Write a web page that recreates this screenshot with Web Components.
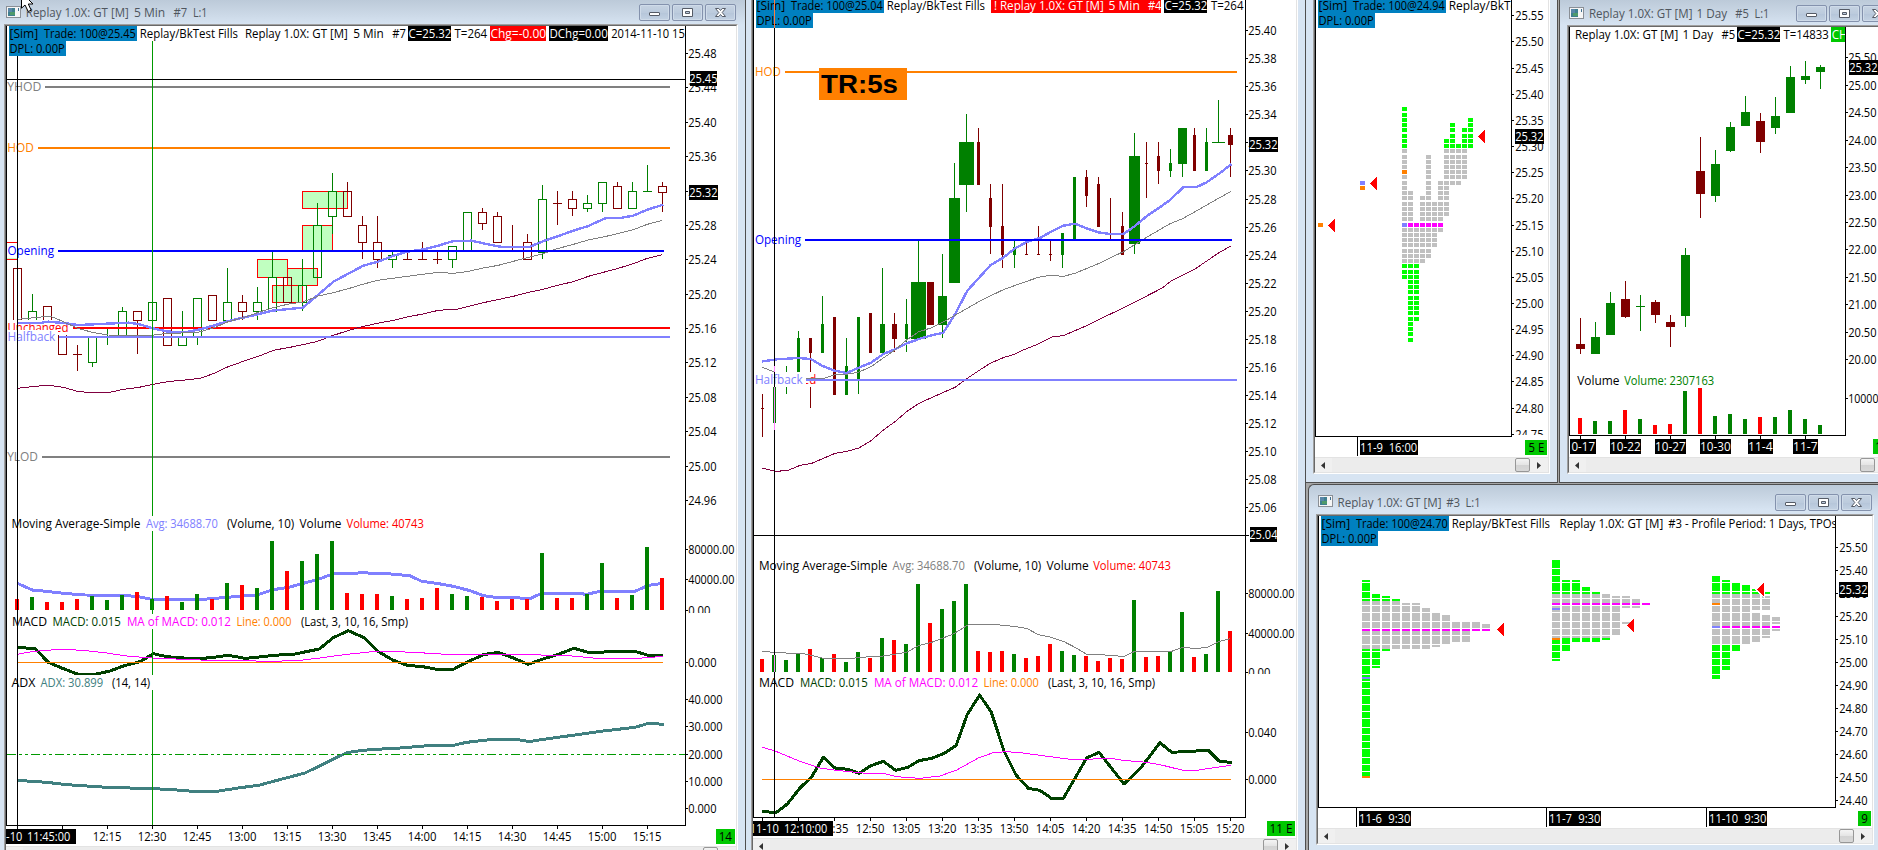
<!DOCTYPE html>
<html lang="en">
<head>
<meta charset="utf-8">
<title>Replay charts</title>
<style>
html,body{margin:0;padding:0;width:1878px;height:850px;overflow:hidden;background:#a6a6a6}
</style>
</head>
<body>
<trading-desk></trading-desk>
<script>
const GREEN='#008000',DARK='#800000',RED='#ff0000',BLUE='#8080ff',ORANGE='#ff8000',LIME='#00ff00',GRAY='#c0c0c0',PINK='#ff00ff',MACD='#004000',BADGE='#00c800',SIM='#0080c0';
const FONT="font-family:'Open Sans','Noto Sans',sans-serif;font-size:12px";

/* ---------- drawing helpers ---------- */
const esc=s=>s.replace(/&/g,'&amp;').replace(/</g,'&lt;');
// The run starts a little early so that the glyphs' side bearings fall outside x1..x2.
const T=(x1,x2,y,s,c='#000')=>`<text x="${(x1-.8).toFixed(1)}" y="${y}" textLength="${(x2-x1+1.3).toFixed(1)}" lengthAdjust="spacingAndGlyphs" fill="${c}">${esc(s)}</text>`;
const R=(x1,y1,x2,y2,c)=>`<rect x="${x1}" y="${y1}" width="${x2-x1}" height="${y2-y1}" fill="${c}"/>`;
const H=(x1,x2,y,c)=>R(x1,y,x2,y+2,c);
// A curve is a list of segments; each holds an origin and points in thirds of a pixel.
const line=(segs,c,w)=>{
  const pts=segs.map(([ox,oy,p])=>p.split(' ').map(q=>{const [a,b]=q.split(',');return (ox+a/3).toFixed(2)+','+(oy+b/3).toFixed(2)}).join(' ')).join(' ');
  return `<polyline points="${pts}" fill="none" stroke="${c}" stroke-width="${w}" stroke-linejoin="round"/>`;
};
const rows=s=>s.split(';').map(r=>r.trim().split(' '));
// Candle row: colour, high, body top, body bottom, low, optional width. "-" marks a bar with no body.
const hollow=(x0,step,data)=>rows(data).map(([k,h,t,b,l],i)=>{
  const c=k==='G'?GREEN:DARK,x=x0+step*i;
  if(t==='-') return R(x,+h,x+1,+l+1,c)+(b==='-'?'':R(x-4,+b,x+5,+b+1,c));
  return (h<t?R(x,+h,x+1,+t,c):'')+(+l>+b?R(x,+b,x+1,+l+1,c):'')+
    `<rect x="${x-3.5}" y="${+t+.5}" width="8" height="${b-t}" fill="none" stroke="${c}"/>`;
}).join('');
const solid=(x0,step,data,dw)=>rows(data).map(([k,h,t,b,l,w=dw],i)=>{
  const c=k==='G'?GREEN:DARK,x=x0+step*i,hw=(w-1)/2;
  return R(x,+h,x+1,+l,c)+(t==='-'?(b==='-'?'':R(x-hw,+b,x+hw+1,+b+1,c)):R(x-hw,+t,x+hw+1,+b,c));
}).join('');
const bars=(x0,step,oy,base,data)=>data.split(' ').map((v,i)=>{
  const x=x0+step*i-2;return R(x,oy+parseInt(v)/3,x+4,base,v.endsWith('R')?RED:GREEN);
}).join('');
const tri=(x,y)=>`<polygon points="${x},${y} ${x+7},${y-6.5} ${x+7},${y+6.5}" fill="${RED}"/>`;
const frame=(x,top,axis,bottom)=>R(x,top,x+1,bottom+1,'#000')+R(x,bottom,axis+1,bottom+1,'#000')+R(axis,top,axis+1,bottom+1,'#000');
const sim=(x,y,price,fills=97)=>R(x,y<0?0:y,x+128,y+15,SIM)+R(x,y+15,x+57,y+30,SIM)+
  T(x+1.3,x+28.7,y+12,'[Sim]')+T(x+35.7,x+126.3,y+12,'Trade: 100@'+price)+T(x+1.3,x+55.3,y+27,'DPL: 0.00P')+
  T(x+131.5,x+131.5+fills,y+12,'Replay/BkTest Fills');
const label=(x,w,bw,y,s,c,up=12)=>R(x-1,y-up,x+bw,y+3,'#fff')+T(x,x+w,y,s,c);
const ticks=(axis,len,list)=>list.map(([y,s,w=27])=>R(axis+1,y,axis+1+len,y+1,'#000')+T(axis+len+2,axis+len+2+w,y+5,s)).join('');
const now=(x,y,s,pad=1)=>R(x,y,x+27+2*pad,y+15,'#000')+T(x+pad,x+pad+27,y+12,s,'#fff');
const times=(y,list)=>list.map(([x,s])=>R(x,y,x+1,y+3,'#000')+(s?T(x-13.5,x+14,y+15,s):'')).join('');

/* ---------- chart 7: five minutes, hollow candles ---------- */
const c7plot=()=>{
 const X=370;
 return [[302,191,347,208],[302,225,332,250],[257,259,287,277],[287,268,317,285],[272,285,302,302]].map(([a,b,c,d])=>`<rect x="${a+.5}" y="${b+.5}" width="${c-a}" height="${d-b}" fill="#c0ffc0" stroke="${RED}"/>`).join('')+
 R(7,242,17,243,RED)+R(7,258,17,259,'#c0ffc0')+R(7,259,17,260,RED)+
 hollow(17,15,`R 268 268 325 325;G 294 311 325 325;R 306 306 325 325;R 332 332 354 354;R 345 - 354 370;G 337 337 362 366;G 328 - - 344;G 307 311 336 336;R 311 311 320 353;G 302 302 320 320;R 298 298 345 345;G 311 337 345 345;G 298 298 337 344;R 295 295 320 320;G 268 302 320 320;R 295 302 311 319;G 287 302 311 319;G 252 277 311 311;R 277 277 302 302;G 259 285 302 310;G 203 225 277 277;G 173 191 216 233;R 182 191 216 216;R 216 225 242 258;R 216 242 259 267;G 252 255 259 267;R 251 - 259 259;R 242 - 259 259;R 252 - 259 263;G 246 246 259 267;G 212 212 250 250;R 208 212 223 229;R 212 216 242 242;R 225 - - 250;R 234 242 259 259;G 185 199 252 258;R 191 - 203 224;R 191 199 208 215;G 195 203 208 211;G 182 182 203 211;R 182 186 208 208;G 182 191 208 208;G 165 - 191 191;R 182 186 192 211`)+
 label(8.3,59.7,62,332,'Unchanged',RED)+
 H(45,670,86,'#808080')+H(38,670,147,ORANGE)+H(73,670,327,RED)+H(42,670,456,'#808080')+
 line([[0,0,'52,969 120,969 145,965 190,969 235,975 282,973 320,971 385,968 415,972 455,984 500,994 530,997 560,996 600,988 640,977 685,963 770,944 817,932 908,923 950,888 1000,845 1088,798'],[X,0,'0,791 22,786 68,768 112,755 160,748 205,737 250,723 305,722 345,731 390,740 430,741 478,741 518,724 560,710 610,692 655,678 705,655 750,654 790,647 832,629 880,614']],BLUE,2.4)+
 line([[0,0,'52,958 105,953 150,948 190,965 235,986 282,998 325,1005 370,1007 455,1006 500,1000 590,998 640,984 685,965 730,953 775,937 820,923 862,913 908,906 955,888 1000,878 1045,866 1088,853'],[X,0,'0,847 22,841 68,835 112,829 158,823 205,817 250,820 290,815 340,804 385,796 430,784 475,772 520,761 562,746 610,733 655,720 700,711 750,699 790,689 832,673 877,661']],'#808080',1)+
 line([[0,0,'52,1165 95,1160 130,1157 155,1157 190,1162 232,1174 262,1177 330,1177 370,1168 412,1163 455,1154 502,1145 565,1139 600,1135 640,1121 680,1102 727,1085 775,1069 820,1051 880,1040 950,1025 1000,1006 1050,990 1090,979'],[X,0,'0,975 22,970 70,961 112,951 158,942 205,931 265,927 305,917 340,908 430,889 475,877 520,868 562,856 610,845 655,829 700,817 745,805 790,791 832,775 877,764']],'#800040',1)+
 H(58,664,250,'#0000ff')+H(59,670,336,BLUE)+
 label(8,33,33,91,'YHOD','#808080')+label(8,25.3,26,152,'HOD',ORANGE)+label(8.3,45.2,47,255,'Opening','#0000ff')+
 label(8.3,46.5,50,341,'Halfback',BLUE,11)+label(8,29.5,31,461,'YLOD','#808080')+
 line([[0,420,'52,490 97,510 140,514 190,520 255,525 375,526 420,531 455,538 610,538 680,532 770,525 820,509 870,501 910,490 955,478 1000,461 1060,461 1090,457'],[X,420,'0,460 40,460 120,467 155,484 200,490 250,499 300,512 340,527 375,532 430,532 478,537 515,520 620,520 650,523 690,514 795,514 835,496 880,490']],BLUE,3)+
 bars(17,15,420,610,'537R 531G 546R 546R 537R 528G 540G 525G 516R 537G 528R 546G 522G 537R 489G 495R 504G 363G 453R 423G 402G 363G 519R 522R 522R 528G 537R 534R 504R 522G 528G 531R 543R 537R 537R 399G 534R 534R 522G 429G 534R 525G 381G 474R')+
 line([[0,420,'52,682 105,686 145,727 185,744 232,762 290,762 330,753 370,738 420,725 460,701 500,710 590,717 640,712 685,706 735,715 770,712 820,706 885,702 958,687 1000,653 1045,632 1092,653'],[X,420,'22,693 68,720 112,736 158,740 200,748 250,748 290,727 340,704 385,697 430,714 475,733 515,718 565,703 612,685 655,697 795,694 835,706 880,706']],MACD,3)+
 line([[0,420,'52,703 100,694 180,688 250,691 320,699 380,708 455,714 600,720 820,724 900,721 960,714 1040,703 1138,693'],[X,420,'130,697 230,703 440,704 585,706 680,715 805,715 880,709']],PINK,1)+
 R(17,662,663,663,ORANGE)+
 line([[0,420,'52,1081 140,1087 200,1094 320,1102 460,1106 520,1109 580,1114 650,1114 715,1104 780,1095 820,1084 915,1059 960,1037 1040,998 1075,993 1110,989'],[X,420,'90,984 185,976 250,976 290,967 370,958 440,958 478,965 520,958 600,947 700,933 795,922 835,910 883,913']],'#408080',3)+
 `<path d="M7 754.5H685" stroke="#009900" stroke-dasharray="9 3 3 3 3 3"/>`+
 R(152,41,153,825,'#009900')+
 R(11,516,425,531,'#fff')+R(11,614,410,629,'#fff')+R(11,675,155,690,'#fff')+
 T(12.3,140,528,'Moving Average-Simple')+T(146.7,217.3,528,'Avg: 34688.70',BLUE)+T(227.7,293.7,528,'(Volume, 10)')+T(300.3,341,528,'Volume')+T(347.3,423.3,528,'Volume: 40743',RED)+
 T(12.7,46.7,626,'MACD')+T(53.3,120.3,626,'MACD: 0.015',MACD)+T(127.7,230.3,626,'MA of MACD: 0.012',PINK)+T(237.3,291,626,'Line: 0.000',ORANGE)+T(301.7,407.7,626,'(Last, 3, 10, 16, Smp)')+
 T(12.3,35,687,'ADX')+T(41.3,102.7,687,'ADX: 30.899','#408080')+T(112.7,149.7,687,'(14, 14)')+
 R(7,79,685,80,'#000')+R(17,56,18,825,'#000')+
 R(9,26,685,41,'#fff')+sim(9,26,'25.45')+
 T(245.7,347.3,38,'Replay 1.0X: GT [M]')+T(354,383.3,38,'5 Min')+T(393,405.3,38,'#7')+
 R(408,26,451,41,'#000')+T(409.3,450.7,38,'C=25.32','#fff')+T(455.3,486.7,38,'T=264')+
 R(490,26,546,41,RED)+T(491.3,545.7,38,'Chg=-0.00','#fff')+R(549,26,608,41,'#000')+T(550.3,607.3,38,'DChg=0.00','#fff')+T(612,684.3,38,'2014-11-10 15')+
 frame(6,26,685,825);
};
const c7axis=()=>ticks(685,2,[[53,'25.48'],[87,'25.44'],[122,'25.40'],[156,'25.36'],[191,'25.32'],[225,'25.28'],[259,'25.24'],[294,'25.20'],[328,'25.16'],[362,'25.12'],[397,'25.08'],[431,'25.04'],[466,'25.00'],[500,'24.96'],[549,'80000.00',45],[579,'40000.00',45],[610,'0.00',21],[662,'0.000'],[699,'40.000',33],[726,'30.000',33],[754,'20.000',33],[781,'10.000',33],[808,'0.000']])+
 R(689,613,736,620,'#fff')+R(690,71,717,86,'#000')+T(690,717,83,'25.45','#fff')+now(689,185,'25.32');
const c7time=()=>times(826,[[17],[62],[107,'12:15'],[152,'12:30'],[197,'12:45'],[242,'13:00'],[287,'13:15'],[332,'13:30'],[377,'13:45'],[422,'14:00'],[467,'14:15'],[512,'14:30'],[557,'14:45'],[602,'15:00'],[647,'15:15']])+
 R(6,829,76,844,'#000')+T(6.9,21.7,841,'-10','#fff')+T(27.7,69.7,841,'11:45:00','#fff')+R(716,829,735,844,BADGE)+T(719.5,731.5,841,'14');

/* ---------- chart 4: five minutes, volume-weighted candles ---------- */
const c4plot=()=>H(785,1237,71,ORANGE)+
 solid(762,12,`R 394 - 408 437;G 387 387 423 423;G 366 - - 394;G 331 338 372 372;R 338 338 353 408;G 296 324 353 353;R 317 317 395 395;G 338 366 395 395;G 317 317 380 394;R 313 313 353 353;G 268 324 353 353 5;R 313 324 339 352 5;G 299 324 339 352;G 241 282 339 339 15;R 282 282 325 325 7;G 254 296 325 338 9;G 163 198 283 283 11;G 114 142 185 212 15;R 128 142 185 185;R 184 198 227 254;R 184 226 255 268;G 241 247 255 268;R 241 - 254 254;R 226 - 254 254;R 241 - 254 261;G 233 233 255 268;G 177 177 239 239;R 170 177 196 207;R 177 184 227 227;R 198 - - 239;R 212 226 255 255;G 133 156 244 254 11;R 142 - 163 198;R 142 156 171 184;G 149 163 171 177;G 128 128 164 177 9;R 128 135 171 171;G 128 142 171 171;G 100 - 142 142 13;R 128 135 145 177 5`,3)+
 line([[740,0,'67,1084 110,1078 175,1074 212,1077 248,1098 283,1112 320,1119 357,1103 393,1088 430,1062 465,1048 500,1030 540,1016 575,1006 610,998 645,943 682,872 752,795 790,773 825,745 862,725'],[1020,0,'25,724 60,714 95,694 130,677 165,671 200,685 235,697 270,702 310,702 345,678 382,647 415,625 450,600 490,562 530,561 560,547 600,519 635,492']],BLUE,2.4)+
 line([[740,0,'67,1102 103,1116 195,1136 250,1136 285,1124 320,1123 357,1116 393,1100 430,1074 465,1050 500,1020 535,996 572,984 610,966 682,925 720,903 790,869 840,851'],[1020,0,'0,851 55,832 90,826 130,829 165,820 235,791 310,755 380,712 450,671 490,655 560,615 633,574']],'#808080',1)+
 line([[740,420,'67,145 110,154 145,151 180,136 215,130 285,100 322,94 357,84 393,62 430,30'],[740,0,'465,1265 500,1235 535,1211 572,1194 645,1162 680,1136 750,1090 790,1073 825,1062'],[1020,0,'0,1054 55,1032 95,1011 130,1007 200,977 235,959 310,924 380,888 425,865 455,842 525,807 600,756 633,738']],'#800040',1)+
 R(755,372,816,387,'#fff')+T(755.7,815.7,384,'Unchanged',RED)+R(806,375,809,382,'#fff')+
 line([[740,0,'195,1136 250,1136']],'#808080',1)+
 H(805,1232,239,'#0000ff')+H(806,1237,379,BLUE)+
 label(755.7,24.6,26,76,'HOD',ORANGE)+label(755.7,45,46,244,'Opening','#0000ff')+label(755.7,46.5,50,384,'Halfback',BLUE)+
 R(819,68,907,100,ORANGE)+`<text x="821" y="92.5" textLength="77" lengthAdjust="spacingAndGlyphs" style="font:bold 26px 'Liberation Sans',Arial,sans-serif">TR:5s</text>`+
 bars(762,12,420,672,'717R 705G 720G 699G 687R 714G 702R 726G 696G 714R 654G 660R 672G 492G 609R 567G 543G 492G 693R 696R 693R 702G 714R 708R 672R 693G 705G 708R 723R 714R 717R 540G 711R 708R 696G 576G 711R 702G 513G 633R')+
 line([[740,420,'67,694 110,698 190,701 215,706 255,716 330,716 360,712 430,708 500,697 535,677 575,667 640,642 685,614 770,614 830,620'],[1020,420,'0,622 22,626 55,644 91,651 130,664 165,682 200,703 280,706 310,710 345,694 455,694 490,681 525,686 562,682 598,664 630,656']],'#808080',1)+
 line([[740,420,'67,1174 108,1178 142,1152 180,1104 215,1070 250,1012 285,1044 325,1048 357,1060 393,1037 430,1024 467,1051 503,1042 537,1022 575,1015 612,1000 648,977 682,883 719,825 754,877 792,993 828,1065'],[1020,420,'25,1105 60,1111 94,1135 130,1135 200,1014 237,997 312,1092 362,1044 420,968 455,997 565,991 597,1023 637,1028']],MACD,3)+
 line([[740,420,'67,982 105,993 180,1024 240,1044 290,1051 380,1060 435,1061 470,1070 540,1075 600,1068 650,1050 715,1014 760,998 800,995 840,998'],[1020,420,'0,998 90,1010 150,1018 205,1019 235,1015 270,1015 310,1021 370,1026 420,1034 485,1050 530,1051 570,1045 633,1036']],PINK,1)+
 R(762,779,1231,780,ORANGE)+
 T(759.7,887,570,'Moving Average-Simple')+T(893.3,964.3,570,'Avg: 34688.70','#808080')+T(974.7,1040.7,570,'(Volume, 10)')+T(1047.3,1088.3,570,'Volume')+T(1094,1170.3,570,'Volume: 40743',RED)+
 T(759.7,793.7,687,'MACD')+T(800.7,867.3,687,'MACD: 0.015',MACD)+T(874.7,977.7,687,'MA of MACD: 0.012',PINK)+T(984.3,1038.3,687,'Line: 0.000',ORANGE)+T(1048.7,1154.7,687,'(Last, 3, 10, 16, Smp)')+
 sim(756,-2,'25.04')+R(991,0,1161,13,RED)+T(994.7,1103.3,10,'! Replay 1.0X: GT [M]','#fff')+T(1109.3,1139.3,10,'5 Min','#fff')+T(1148.7,1161,10,'#4','#fff')+
 R(1164,0,1207,13,'#000')+T(1165.3,1206.7,10,'C=25.32','#fff')+T(1211.7,1243,10,'T=264')+
 R(753,535,1245,536,'#000')+R(774,28,775,817,'#000')+R(774,0,775,28,'#ff7f3f')+R(774,366,775,372,'#ff7fff')+R(774,387,775,430,'#ff7fff')+R(774,655,775,672,'#ff7fff')+
 frame(753,0,1245,817);
const c4axis=()=>ticks(1245,2,Array.from({length:18},(_,k)=>[Math.round(30.2+k*28.05),(25.40-k*.02).toFixed(2)]).concat([[593,'80000.00',45],[633,'40000.00',45],[672,'0.00',21],[732,'0.040'],[779,'0.000']]))+
 R(1249,674,1296,680,'#fff')+now(1249,137,'25.32')+R(1246,535,1249,536,'#000')+R(1250,527,1277,542,'#000')+T(1250,1277,539,'25.04','#fff');
const c4time=()=>times(818,[[762],[798],[834,'12:35'],[870,'12:50'],[906,'13:05'],[942,'13:20'],[978,'13:35'],[1014,'13:50'],[1050,'14:05'],[1086,'14:20'],[1122,'14:35'],[1158,'14:50'],[1194,'15:05'],[1230,'15:20']])+
 R(753,821,833,836,'#000')+T(750.5,778.3,833,'11-10','#fff')+T(784.7,826.7,833,'12:10:00','#fff')+R(1267,821,1295,836,BADGE)+T(1270.3,1292,833,'11 E');

/* ---------- market profile, 30-minute columns ---------- */
const profCells=(x,cells)=>cells.map(([n,c])=>{const y=Math.round(170.2+n*5.23);return R(x,y,x+5,y+4,c)}).join('');
const span=(a,b,c)=>Array.from({length:b-a+1},(_,i)=>[a+i,c]);
const mpPlot=()=>[
 [[-12,-5,LIME],[-4,17,GRAY],[18,20,LIME],[0,0,ORANGE],[10,10,BLUE]],
 [[4,17,GRAY],[18,32,LIME]],[[11,17,GRAY],[18,28,LIME]],[[5,17,GRAY]],[[-3,16,GRAY]],[[6,14,GRAY]],[[2,11,GRAY]],
 [[-6,-5,LIME],[-4,8,GRAY]],[[-9,-5,LIME],[-4,2,GRAY]],[[-5,-5,LIME],[-4,2,GRAY]],[[-8,-5,LIME],[-4,1,GRAY]],[[-10,-5,LIME]]
 ].map((col,k)=>profCells(1402+6*k,col.flatMap(a=>span(...a)).concat(k>0&&k<7?[[10,PINK]]:[]))).join('')+
 profCells(1360,[[2,BLUE],[3,ORANGE]])+profCells(1318,[[10,ORANGE]])+tri(1478,136.5)+tri(1370,183.5)+tri(1328,225.5)+
 sim(1318,-2,'24.94',101)+frame(1315,0,1511,436);
const mpAxis=()=>ticks(1511,2,Array.from({length:17},(_,k)=>[Math.round(15.3+k*26.15),(25.55-k*.05).toFixed(2)])).replace(/x="1514.2"/g,'x="1515.2"')+
 R(1515,435,1548,440,'#fff')+now(1515,129,'25.32');
const mpTime=()=>R(1357,436,1358,456,'#000')+R(1360,440,1418,455,'#000')+T(1360.9,1382.5,452,'11-9','#fff')+T(1389.5,1416.7,452,'16:00','#fff')+R(1525,440,1547,455,BADGE)+T(1529.3,1543.7,452,'5 E');

/* ---------- chart 5: daily ---------- */
const dayPlot=()=>solid(1580,15,`R 318 344 349 354;G 322 337 354 354;G 292 303 335 335;R 281 299 317 318;G 295 - 306 331;R 300 302 315 323;R 315 322 327 347;G 248 255 316 327;R 137 171 194 218;G 150 164 196 202;G 122 127 151 152;G 96 112 126 126;R 113 121 142 153;G 97 116 128 134;G 66 77 113 113;G 61 76 80 84;G 65 67 72 89`,9)+
 bars(1580,15,0,434,'1254R 1263G 1263G 1230R 1257G 1275R 1272R 1173G 1164R 1248G 1242G 1257G 1251R 1251G 1230G 1257G 1275G')+
 T(1578,1619,385,'Volume')+T(1625,1713.7,385,'Volume: 2307163',GREEN)+
 T(1575.7,1677.7,39,'Replay 1.0X: GT [M]')+T(1683.3,1712.7,39,'1 Day')+T(1722.3,1734.7,39,'#5')+R(1737,27,1780,42,'#000')+T(1738.3,1779.7,39,'C=25.32','#fff')+T(1784.3,1828.3,39,'T=14833')+
 R(1831,27,1845,42,BADGE)+T(1832.5,1847,39,'CH','#fff')+frame(1569,27,1845,435);
const dayAxis=()=>ticks(1845,2,[[57,'25.50'],[85,'25.00'],[112,'24.50'],[140,'24.00'],[167,'23.50'],[195,'23.00'],[222,'22.50'],[249,'22.00'],[277,'21.50'],[304,'21.00'],[332,'20.50'],[359,'20.00'],[398,'10000',29]])+now(1849,60,'25.32');
const dayTime=()=>[1580,1625,1670,1715,1760,1805].map(x=>R(x,436,x+1,439,'#000')).join('')+
 R(1570,439,1596,454,'#000')+T(1565.7,1594.5,451,'10-17','#fff')+
 [[1610,31,'10-22'],[1655,31,'10-27'],[1700,31,'10-30'],[1748,25,'11-4'],[1793,25,'11-7']].map(([x,w,s])=>R(x,439,x+w,454,'#000')+T(x+.9,x+w-.9,451,s,'#fff')).join('')+
 R(1873,439,1893,454,BADGE)+T(1876,1881,451,'1');

/* ---------- chart 3: daily market profiles ---------- */
const gaps=[568,575,582,591,598,605,612,621,628,635,644,651,658,665,674,681,688,695,704,711,718,727,734,741,748,757,764,771];
const prof=(x0,cols)=>cols.map((col,k)=>col.map(([a,b,c])=>R(x0+10*k,480+a/3,x0+10*k+8,480+b/3,c)).join('')).join('')+
 gaps.map(y=>R(x0,y,x0+10*cols.length,y+1,'#fff')).join('');
const strip=(x0,a,b,y,c)=>{let s='';for(let k=a;k<=b;k++)s+=R(x0+10*k,y,x0+10*k+8,y+2,c);return s};
const dpPlot=()=>prof(1362,[
 [[300,363,LIME],[363,507,GRAY],[507,894,LIME]],[[342,363,LIME],[363,507,GRAY],[507,564,LIME]],[[348,363,LIME],[363,507,GRAY],[507,513,LIME]],[[357,363,LIME],[363,507,GRAY]],
 [[369,507,GRAY]],[[369,507,GRAY]],[[384,507,GRAY]],[[399,501,GRAY]],[[405,492,GRAY]],[[426,486,GRAY]],[[426,486,GRAY]],[[426,444,GRAY]],[[432,444,GRAY]]])+
 strip(1362,0,12,629,PINK)+strip(1362,0,0,677,BLUE)+strip(1362,0,0,776,ORANGE)+tri(1497,629.5)+
 prof(1552,[[[240,342,LIME],[342,474,GRAY],[474,543,LIME]],[[300,342,LIME],[342,474,GRAY],[474,513,LIME]],[[300,342,LIME],[342,474,GRAY],[474,486,LIME]],[[321,342,LIME],[342,474,GRAY],[474,486,LIME]],
 [[336,342,LIME],[342,474,GRAY],[474,486,LIME]],[[342,474,GRAY],[474,480,LIME]],[[348,465,GRAY]],[[348,384,GRAY],[426,432,GRAY]],[[357,384,GRAY]],[]])+
 strip(1552,0,9,603,PINK)+strip(1552,0,0,608,BLUE)+strip(1552,0,0,638,ORANGE)+tri(1627,625.5)+
 prof(1712,[[[288,342,LIME],[342,492,GRAY],[492,597,LIME]],[[300,342,LIME],[342,492,GRAY],[492,570,LIME]],[[309,342,LIME],[342,492,GRAY],[492,513,LIME]],[[315,342,LIME],[342,492,GRAY]],
 [[327,342,LIME],[342,390,GRAY],[399,486,GRAY]],[[336,342,LIME],[348,390,GRAY],[405,474,GRAY]],[[411,432,GRAY],[447,453,GRAY]]])+
 strip(1712,0,0,603,ORANGE)+strip(1712,1,6,626,PINK)+strip(1712,0,0,626,BLUE)+
 `<polygon points="1755,589.5 1765,580.5 1765,598.5" fill="#fff"/>`+tri(1757,589.5)+
 `<svg x="1318" y="516" width="517" height="40" viewBox="1318 516 517 40">`+sim(1321,516,'24.70')+T(1560.3,1662.7,528,'Replay 1.0X: GT [M]')+T(1669,1836.5,528,'#3 - Profile Period: 1 Days, TPOs')+`</svg>`+
 frame(1318,516,1835,807);
const dpAxis=()=>ticks(1835,2,Array.from({length:12},(_,k)=>[Math.round(547+k*23.03),(25.5-k*.1).toFixed(2)])).replace(/x="1838.2"/g,'x="1839.2"')+now(1839,582,'25.32');
const dpTime=()=>[[1356,52,'11-6','9:30',22],[1546,52,'11-7','9:30',22],[1706,58,'11-10','9:30',28]].map(([x,w,a,b,l])=>R(x,807,x+1,827,'#000')+R(x+3,811,x+3+w,826,'#000')+T(x+3.9,x+3.5+l,823,a,'#fff')+T(x+3+w-22,x+2+w,823,b,'#fff')).join('')+
 R(1858,811,1871,826,BADGE)+T(1862,1867.3,823,'9');

/* Window geometry: outer box, padding to the client border, client contents, and its panes. */
const WINDOWS=[
 {box:[0,0,746,880],edge:'0 1px 0 0',pad:[24,7,7,4],view:[6,26,730,845],axis:686,bottom:826,time:846,plot:c7plot,scale:c7axis,clock:c7time,
  title:[[26.6,128.3,'Replay 1.0X: GT [M]'],[134.7,164.7,'5 Min'],[174.3,186.7,'#7'],[193.7,207,'L:1']],ty:17,ix:6,iy:6,by:4},
 {box:[746,-2,560,882],edge:'0 1px 0 0',pad:[0,7,7,5],view:[753,0,543,870],axis:1246,bottom:818,time:838,plot:c4plot,scale:c4axis,clock:c4time},
 {box:[1306,-2,252,485],edge:'0 1px 1px 0',pad:[0,7,7,7],view:[1315,0,233,473],axis:1512,bottom:437,time:457,plot:mpPlot,scale:mpAxis,clock:mpTime},
 {box:[1559,0,344,483],edge:'0 0 1px 1px',pad:[25,8,8,7],view:[1569,27,324,446],axis:1846,bottom:436,time:457,plot:dayPlot,scale:dayAxis,clock:dayTime,
  title:[[1589.7,1692,'Replay 1.0X: GT [M]'],[1697.3,1726.7,'1 Day'],[1736,1748.3,'#5'],[1755.3,1768.7,'L:1']],ty:18,ix:1569,iy:7,by:5},
 {box:[1308,484,572,376],edge:'1px 0 0 1px',radius:'6px 0 0 0',pad:[29,5,13,7],view:[1318,516,554,328],axis:1836,bottom:808,time:828,plot:dpPlot,scale:dpAxis,clock:dpTime,
  title:[[1338.3,1441,'Replay 1.0X: GT [M]'],[1447,1459.7,'#3'],[1466.3,1480,'L:1']],ty:507,ix:1318,iy:495,by:494}
];

const attach=(el,html)=>{const t=document.createElement('template');t.innerHTML=html;el.attachShadow({mode:'open'}).append(t.content.cloneNode(true))};

/* <chart-pane win part>: one SVG pane drawn in desk coordinates. */
class ChartPane extends HTMLElement{
 connectedCallback(){
  const w=WINDOWS[this.getAttribute('win')],[x,y,wd]=w.view;
  const areas={plot:[x,y,w.axis-x,w.bottom-y],scale:[w.axis,y,x+wd-w.axis,w.bottom-y],clock:[x,w.bottom,wd,w.time-w.bottom]};
  const k=this.getAttribute('part'),a=areas[k];
  attach(this,`<style>:host{display:block;overflow:hidden}svg{display:block;shape-rendering:crispEdges;${FONT}}text{white-space:pre}</style>
  <svg width="${a[2]}" height="${a[3]}" viewBox="${a.join(' ')}">${w[k]()}</svg>`);
 }}
customElements.define('chart-pane',ChartPane);

class ScrollStrip extends HTMLElement{
 connectedCallback(){attach(this,`<style>
 :host{display:flex;align-items:stretch;height:15px;background:#ececec;border-top:1px solid #e3e3e3;box-sizing:border-box}
 .a{flex:0 0 17px;display:flex;align-items:center;justify-content:center;background:#f0f0f0}
 .r{flex-basis:18px}
 .s{flex:1}
 .t{flex:0 0 15px;box-sizing:border-box;border:1px solid #979797;border-radius:2px;background:linear-gradient(#f4f4f4,#e4e4e4 50%,#d3d3d3 51%,#d8d8d8)}
 svg{display:block}</style>
 <div class="a"><svg width="5" height="7"><path d="M4 0L0 3.5L4 7Z" fill="#333"/></svg></div><div class="s"></div><div class="t"></div>
 <div class="a r"><svg width="5" height="7"><path d="M0 0L4 3.5L0 7Z" fill="#333"/></svg></div>`)}}
customElements.define('scroll-strip',ScrollStrip);

class CaptionButton extends HTMLElement{
 connectedCallback(){
  const g={min:'<rect x="10.5" y="8.5" width="10" height="3" rx=".5" fill="#fff" stroke="#555b66"/>',
   max:'<path d="M10.5 4.5h10v8h-10zM13.5 7.5v2h4v-2z" fill="#fff" fill-rule="evenodd" stroke="#555b66"/>',
   close:'<path d="M10.5 4.5h3.3l1.7 2 1.7-2h3.3l-3.3 4 3.3 4h-3.3l-1.7-2-1.7 2h-3.3l3.3-4z" fill="#fff" stroke="#555b66"/>'}[this.getAttribute('kind')];
  attach(this,`<style>:host{display:block;width:31px;height:17px;box-sizing:border-box;border:1px solid #8492ad;border-radius:2px;background:linear-gradient(#c6d3e2,#bccbdd 50%,#b5c5d9 51%,#c3d2e3);box-shadow:inset 0 0 0 1px #cfdbe9}svg{display:block;margin:-1px}</style><svg width="31" height="17">${g}</svg>`);
 }}
customElements.define('caption-button',CaptionButton);

class CaptionBar extends HTMLElement{
 connectedCallback(){
  const w=WINDOWS[this.getAttribute('win')],b=w.box,left=w.ix;
  attach(this,`<style>:host{display:flex;align-items:flex-start;gap:2px}.c{flex:1;min-width:0;overflow:hidden}svg{display:block;${FONT}}caption-button{margin-top:${w.by-b[1]-(w.box[1]>0?1:0)}px;flex:none}</style>
  <div class="c"><svg width="400" height="24" viewBox="${left} ${b[1]+(b[1]>0?1:0)} 400 24">
   <rect x="${w.ix+.5}" y="${w.iy+.5}" width="14" height="11" fill="#f6f6f6" stroke="#8a8f96"/>
   <rect x="${w.ix+2}" y="${w.iy+2}" width="7" height="8" fill="#3f7f8f"/><rect x="${w.ix+2}" y="${w.iy+2}" width="4" height="4" fill="#5a87a8"/><rect x="${w.ix+4}" y="${w.iy+6}" width="5" height="3" fill="#4f9a6a"/>
   <rect x="${w.ix+12}" y="${w.iy+2}" width="1" height="3" fill="#3f6f8f"/>
   ${w.title.map(([a,c,s])=>T(a,c,w.ty,s,'#4f565e')).join('')}</svg></div>
  <caption-button kind="min"></caption-button><caption-button kind="max"></caption-button><caption-button kind="close"></caption-button>`);
 }}
customElements.define('caption-bar',CaptionBar);

class ReplayWindow extends HTMLElement{
 connectedCallback(){
  const i=this.getAttribute('win'),w=WINDOWS[i],[x,y,wd,ht]=w.box,v=w.view,[pt,pr,pb,pl]=w.pad;
  const lb=w.edge.endsWith(' 1px')?1:0;
  attach(this,`<style>
  :host{position:absolute;left:${x}px;top:${y}px;width:${wd}px;height:${ht}px;box-sizing:border-box;border:0 solid #4e4e4e;border-width:${w.edge};border-radius:${w.radius||0};overflow:hidden;
   display:flex;flex-direction:column;padding:0 0 0 ${pl}px;background:${w.title?'linear-gradient(#bccad9,#cbd8e6 14px,#d7e4f2 25px)':'#d7e4f2'}}
  caption-bar{height:${pt}px;flex:none;width:${v[0]+v[2]-w.ix||0}px;margin-left:${w.ix-(x+pl+lb)||0}px}
  .client{width:${v[2]+4}px;box-sizing:border-box;border:1px solid;border-color:#a0a0a0 #fff #fff #a0a0a0;background:#fff;flex:none}
  .inner{border:1px solid;border-color:#696969 #e3e3e3 #e3e3e3 #696969;display:grid;grid-template-columns:${w.axis-v[0]}px 1fr;grid-template-rows:${w.bottom-v[1]}px ${w.time-w.bottom}px auto}
  .wide{grid-column:1/3}
  </style>
  ${w.title?`<caption-bar win="${i}"></caption-bar>`:''}
  <div class="client"><div class="inner">
   <chart-pane win="${i}" part="plot"></chart-pane><chart-pane win="${i}" part="scale"></chart-pane>
   <chart-pane class="wide" win="${i}" part="clock"></chart-pane><scroll-strip class="wide"></scroll-strip>
  </div></div>`);
 }}
customElements.define('replay-window',ReplayWindow);

class TradingDesk extends HTMLElement{
 connectedCallback(){attach(this,`<style>:host{display:block;position:relative;width:1878px;height:850px;overflow:hidden;background:#a6a6a6}.cursor{position:absolute;left:21px;top:0}</style>
 ${WINDOWS.map((_,i)=>`<replay-window win="${i}"></replay-window>`).join('')}
 <svg class="cursor" width="14" height="14"><path d="M.5 -6V8.2L4 5L7.2 11.5L10.2 10.2L7.3 4H12L1 -7Z" fill="#fff" stroke="#000"/></svg>`)}}
customElements.define('trading-desk',TradingDesk);
</script>
</body>
</html>
